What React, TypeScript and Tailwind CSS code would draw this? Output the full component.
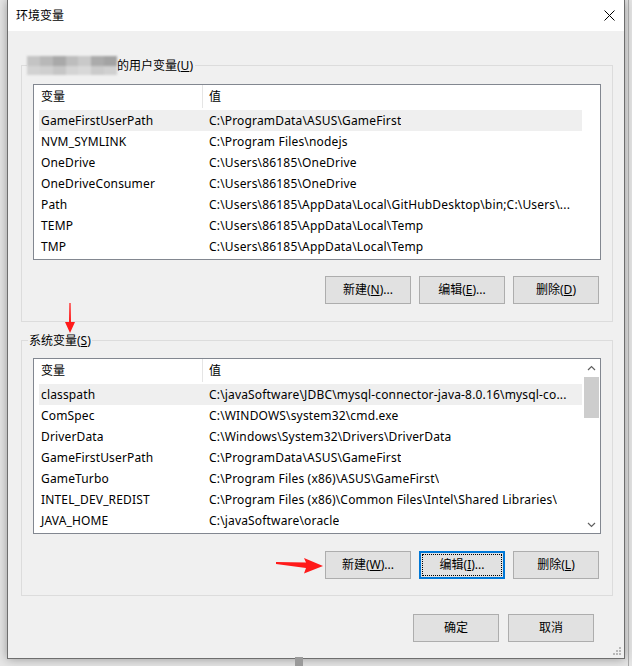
const USER_VARS = [
  ["GameFirstUserPath", "C:\\ProgramData\\ASUS\\GameFirst"],
  ["NVM_SYMLINK", "C:\\Program Files\\nodejs"],
  ["OneDrive", "C:\\Users\\86185\\OneDrive"],
  ["OneDriveConsumer", "C:\\Users\\86185\\OneDrive"],
  ["Path", "C:\\Users\\86185\\AppData\\Local\\GitHubDesktop\\bin;C:\\Users\\..."],
  ["TEMP", "C:\\Users\\86185\\AppData\\Local\\Temp"],
  ["TMP", "C:\\Users\\86185\\AppData\\Local\\Temp"],
];

const SYS_VARS = [
  ["classpath", "C:\\javaSoftware\\JDBC\\mysql-connector-java-8.0.16\\mysql-co..."],
  ["ComSpec", "C:\\WINDOWS\\system32\\cmd.exe"],
  ["DriverData", "C:\\Windows\\System32\\Drivers\\DriverData"],
  ["GameFirstUserPath", "C:\\ProgramData\\ASUS\\GameFirst"],
  ["GameTurbo", "C:\\Program Files (x86)\\ASUS\\GameFirst\\"],
  ["INTEL_DEV_REDIST", "C:\\Program Files (x86)\\Common Files\\Intel\\Shared Libraries\\"],
  ["JAVA_HOME", "C:\\javaSoftware\\oracle"],
];

const BLUR = [
  "#c4c4c4", "#b8b8b8", "#a9a9a9", "#bdbdbd", "#c9c9c9", "#ababab", "#a3a3a3",
  "#d2d2d2", "#cfcfcf", "#c6c6c6", "#d4d4d4", "#d8d8d8", "#cbcbcb", "#d0d0d0",
];

function Button({ children, focused }: { children: React.ReactNode; focused?: boolean }) {
  if (focused) {
    return (
      <div className="h-[28px] w-[86px] border-2 border-[#0078d7] bg-[#e1e1e1] p-px">
        <div className="flex h-full w-full items-center justify-center border border-dotted border-black">
          {children}
        </div>
      </div>
    );
  }
  return (
    <div className="flex h-[28px] w-[86px] items-center justify-center border border-[#adadad] bg-[#e1e1e1]">
      {children}
    </div>
  );
}

function Chevron({ up }: { up?: boolean }) {
  return (
    <svg width="9" height="6" viewBox="0 0 9 6">
      <polyline
        points={up ? "1,5 4.5,1.5 8,5" : "1,1 4.5,4.5 8,1"}
        fill="none"
        stroke="#606060"
        strokeWidth="1.2"
      />
    </svg>
  );
}

function VarTable({ rows, scroll }: { rows: string[][]; scroll?: boolean }) {
  return (
    <div className="flex h-[176px] w-[568px] border border-[#828790] bg-white">
      <div className="w-[548px] pl-[5px]">
        <div className="flex h-[23px] items-center">
          <div className="flex h-full w-[164px] items-center border-r border-[#e5e5e5] pl-[2px]">变量</div>
          <div className="pl-[6px]">值</div>
        </div>
        <div className="pt-[2px]">
          {rows.map(([name, value], i) => (
            <div key={name} className={`flex h-[21px] items-center ${i === 0 ? "bg-[#efefef]" : ""}`}>
              <div className="w-[170px] pl-[2px] tracking-[0.15px]">{name}</div>
              <div className="overflow-hidden whitespace-nowrap tracking-[0.17px]">{value}</div>
            </div>
          ))}
        </div>
      </div>
      {scroll && (
        <div className="ml-auto flex w-[17px] flex-col items-center">
          <div className="flex h-[17px] w-full items-center justify-center">
            <Chevron up />
          </div>
          <div className="mt-px h-[41px] w-[15px] bg-[#cdcdcd]" />
          <div className="mt-auto flex h-[17px] w-full items-center justify-center">
            <Chevron />
          </div>
        </div>
      )}
    </div>
  );
}

export default function App() {
  return (
    <div
      className="relative h-[666px] w-[632px] overflow-hidden bg-[#e6e6e6] text-[12px] text-black"
      style={{ fontFamily: '"Noto Sans", "Noto Sans CJK SC", sans-serif' }}
    >
      {/* background window edge on the right */}
      <div className="absolute top-0 right-[3px] h-[666px] w-px bg-[#a5a5a5]" />
      <div className="absolute bottom-0 left-[295px] h-[9px] w-[8px] bg-[#9a9a9a]" />

      <div className="ml-[7px] flex h-[659px] w-[618px] flex-col border-x border-b border-[#6e6e6e] bg-[#f0f0f0] shadow-[0_0_10px_rgba(0,0,0,0.35)]">
        <div className="flex h-[31px] items-center justify-between bg-white pr-[9px] pl-[8px]">
          <span>环境变量</span>
          <svg width="11" height="11" viewBox="0 0 11 11">
            <path d="M0.5 0.5 L10.5 10.5 M10.5 0.5 L0.5 10.5" stroke="#000" strokeWidth="1" />
          </svg>
        </div>

        <div className="relative flex flex-1 flex-col pl-[13px]">
          {/* user variables */}
          <div className="relative mt-[34px] w-[592px] border border-[#dcdcdc] px-[11px] pt-[18px] pb-[17px]">
            <div className="absolute -top-[10px] left-[5px] flex h-[19px] items-center bg-[#f0f0f0] pr-[2px]">
              <div className="grid h-[19px] w-[90px] grid-cols-7 grid-rows-2 blur-[1px]">
                {BLUR.map((c, i) => (
                  <div key={i} style={{ backgroundColor: c }} />
                ))}
              </div>
              <span>
                的用户变量(<u>U</u>)
              </span>
            </div>
            <VarTable rows={USER_VARS} />
            <div className="mt-[16px] flex justify-end gap-[8px] pr-[2px]">
              <Button>
                新建(<u>N</u>)...
              </Button>
              <Button>
                编辑(<u>E</u>)...
              </Button>
              <Button>
                删除(<u>D</u>)
              </Button>
            </div>
          </div>

          {/* system variables */}
          <div className="relative mt-[18px] w-[592px] border border-[#dcdcdc] px-[11px] pt-[17px] pb-[16px]">
            <div className="absolute -top-[10px] left-[6px] bg-[#f0f0f0] px-px leading-[19px]">
              系统变量(<u>S</u>)
            </div>
            <VarTable rows={SYS_VARS} scroll />
            <div className="mt-[17px] flex justify-end gap-[8px] pr-[2px]">
              <Button>
                新建(<u>W</u>)...
              </Button>
              <Button focused>
                编辑(<u>I</u>)...
              </Button>
              <Button>
                删除(<u>L</u>)
              </Button>
            </div>
          </div>

          <div className="mt-[18px] flex justify-end gap-[9px] pr-[30px]">
            <Button>确定</Button>
            <Button>取消</Button>
          </div>

          <svg className="absolute right-[3px] bottom-[3px]" width="8" height="8" viewBox="0 0 8 8">
            <g fill="#b8b8b8">
              <rect x="6" y="0" width="2" height="2" />
              <rect x="3" y="3" width="2" height="2" />
              <rect x="6" y="3" width="2" height="2" />
              <rect x="0" y="6" width="2" height="2" />
              <rect x="3" y="6" width="2" height="2" />
              <rect x="6" y="6" width="2" height="2" />
            </g>
          </svg>
        </div>
      </div>

      {/* red annotation arrows */}
      <svg className="absolute top-0 left-0" width="632" height="666" viewBox="0 0 632 666">
        <polygon points="69.4,303 70.6,303 71,322 75,322 70,333 65,322 69,322" fill="#ff1a1a" />
        <polygon points="276,562 306,562.5 304,558 323,566 304,573.5 306,568 276,564" fill="#ff1a1a" />
      </svg>
    </div>
  );
}
